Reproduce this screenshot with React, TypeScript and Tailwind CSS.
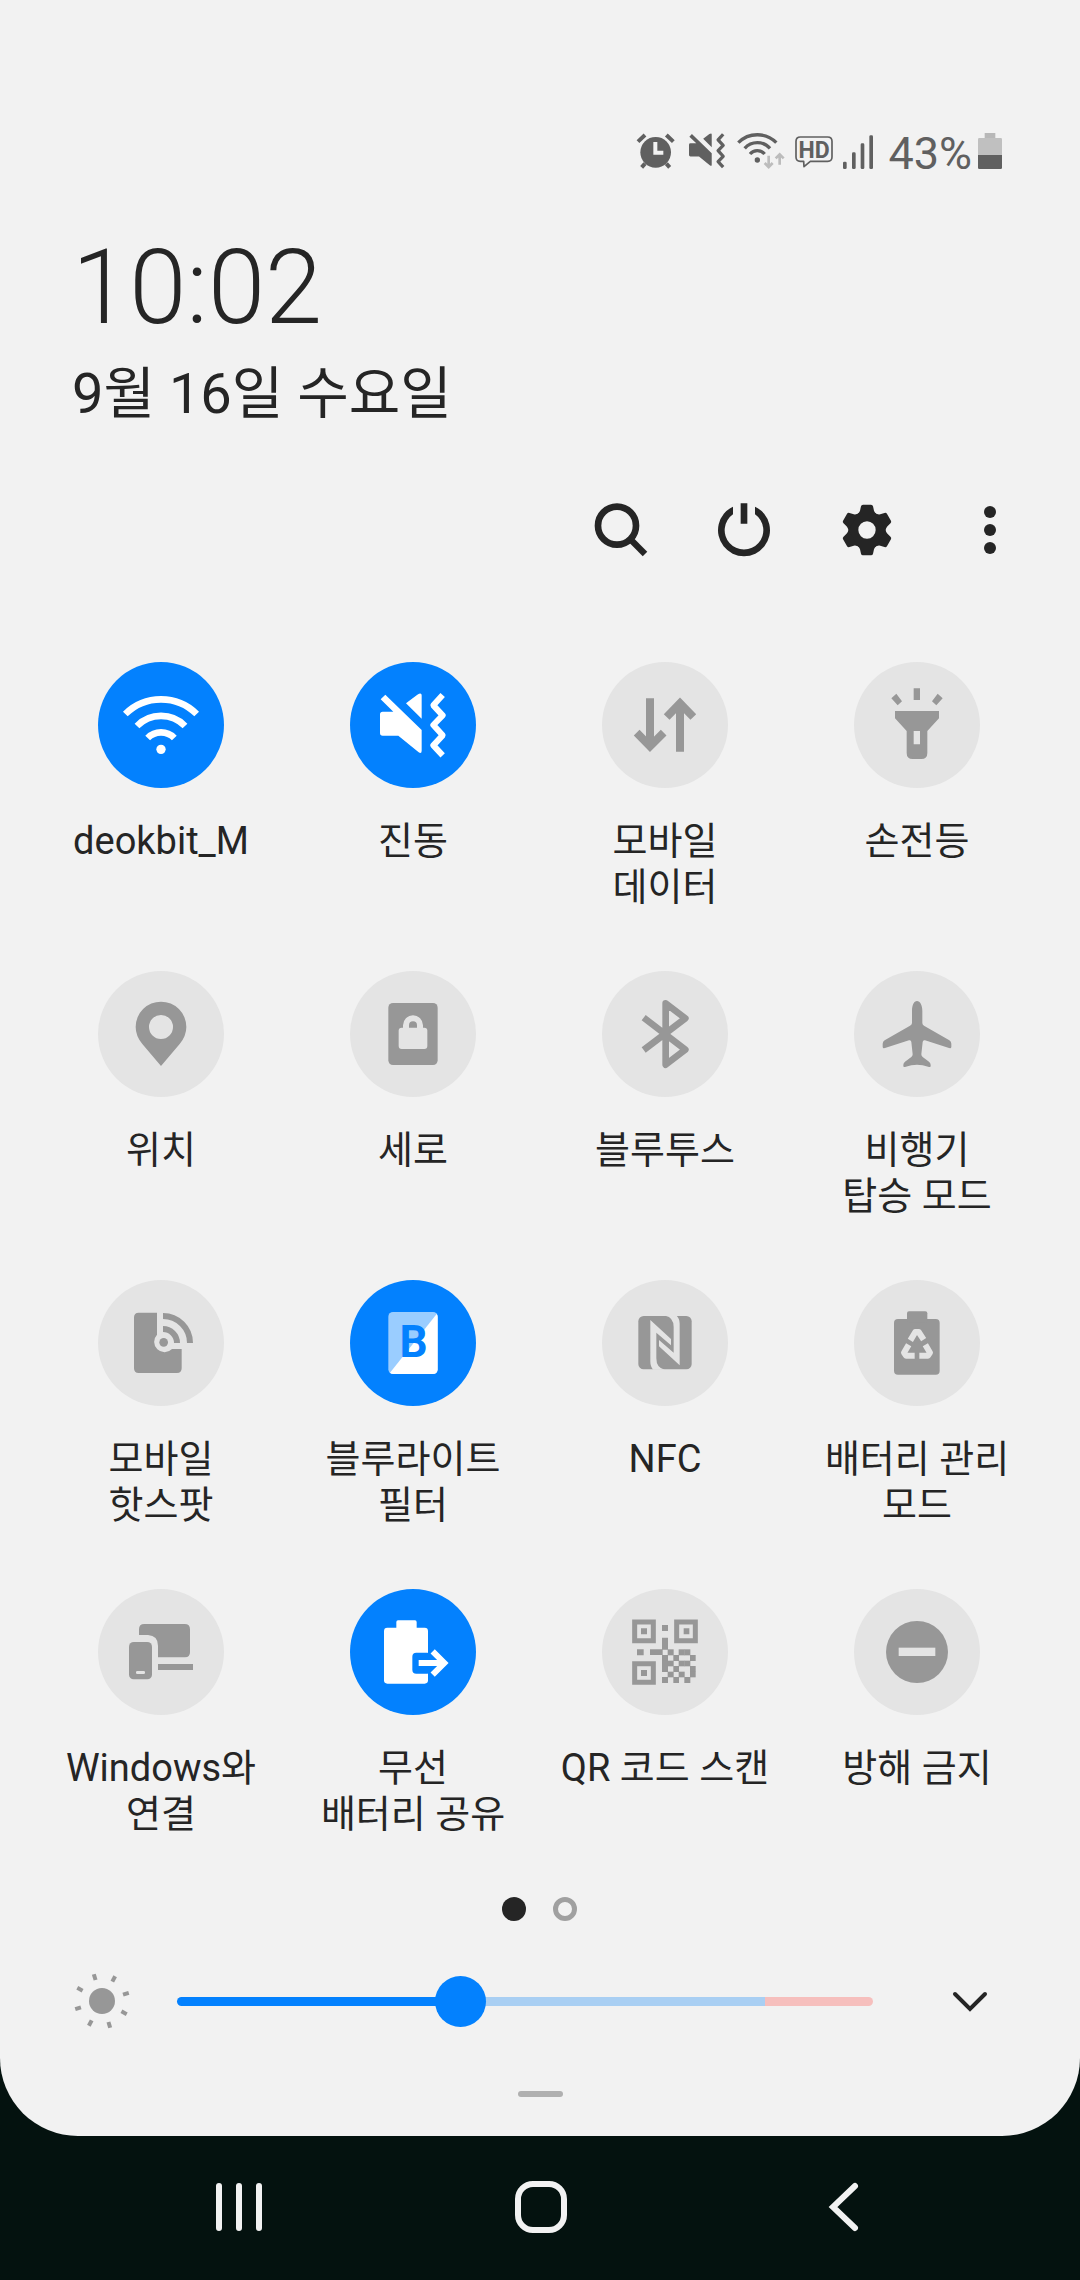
import { useState, type ReactNode } from "react";

const OFF = "#e4e4e4";
const BLUE = "#0381fe";

// Shared by the status bar and the vibrate tile
const vibrateShape = (
  <>
    <path
      fill="currentColor"
      d="M168 124L202 98Q215 90 215 100V170ZM106 98L215 204V266Q215 276 206 271L145 221H98Q90 221 90 213V157Q90 149 98 149H130L92 112Z"
    />
    <path
      fill="none"
      stroke="currentColor"
      strokeWidth="18"
      strokeLinejoin="round"
      d="M278 99L250 130L278 160L250 189L278 220L250 250L278 280"
    />
  </>
);

const qrCells = [".#.##.", "#.#..#", "##.##.", "#.#..#", ".#.#.#", "#.#.#."];
const qrX = [180, 197, 214, 230, 247, 264, 280];
const qrY = [181, 198, 215, 231, 248, 264, 281];

type Tile = { label: string; on?: boolean; icon: ReactNode };

const tiles: Tile[] = [
  {
    label: "deokbit_M",
    on: true,
    icon: (
      <>
        <path
          fill="none"
          stroke="currentColor"
          strokeWidth="20"
          d="M82 156A152 152 0 0 1 296 156M117 192A101 101 0 0 1 261 192M149 228A56 56 0 0 1 229 228"
        />
        <circle cx="189" cy="262" r="14" />
      </>
    ),
  },
  { label: "진동", on: true, icon: vibrateShape },
  {
    label: "모바일\n데이터",
    icon: (
      <path
        fill="none"
        stroke="currentColor"
        strokeWidth="24"
        d="M144 109V250M104 212L144 253L185 212M234 269V127M194 165L234 124L274 165"
      />
    ),
  },
  {
    label: "손전등",
    icon: (
      <>
        <path d="M179 79H198V114H179ZM112 109L127 95L144 118L131 130ZM266 109L251 95L234 118L247 130Z" />
        <path
          fillRule="evenodd"
          d="M123 147H255V169L220 207V273Q220 291 202 291H176Q158 291 158 273V207L123 169ZM179 207V247H198V207Z"
        />
      </>
    ),
  },
  {
    label: "위치",
    icon: (
      <path
        fillRule="evenodd"
        d="M189 285L133 219Q113 195 113 168A76 76 0 0 1 265 168Q265 195 245 219ZM153 168A36 36 0 1 0 225 168A36 36 0 1 0 153 168Z"
      />
    ),
  },
  {
    label: "세로",
    icon: (
      <>
        <rect x="115" y="96" width="148" height="186" rx="14" />
        <rect x="146" y="170" width="86" height="64" rx="9" fill={OFF} />
        <path fill="none" stroke={OFF} strokeWidth="18" d="M168 174V163A21 21 0 0 1 210 163V174" />
      </>
    ),
  },
  {
    label: "블루투스",
    icon: (
      <path
        fill="none"
        stroke="currentColor"
        strokeWidth="20"
        strokeLinejoin="round"
        d="M125 140L250 236L191 281V97L250 142L125 237"
      />
    ),
  },
  {
    label: "비행기\n탑승 모드",
    icon: (
      <path d="M189 90C198 90 205 102 205 120V156Q205 161 210 164L286 208Q292 212 292 218V227Q292 233 285 231L213 208Q207 206 206 213L202 250Q202 255 206 258L225 272Q230 276 230 282V286Q230 289 225 288Q205 281 189 281Q173 281 153 288Q148 289 148 286V282Q148 276 153 272L172 258Q176 255 176 250L172 213Q171 206 165 208L93 231Q86 233 86 227V218Q86 212 92 208L168 164Q174 161 174 156V120C174 102 180 90 189 90Z" />
    ),
  },
  {
    label: "모바일\n핫스팟",
    icon: (
      <>
        <path d="M122 98H177V164A31 31 0 1 0 222 207H251V265Q251 279 237 279H122Q108 279 108 265V112Q108 98 122 98Z" />
        <circle cx="197" cy="187" r="13" />
        <path
          fill="none"
          stroke="currentColor"
          strokeWidth="18"
          d="M195 147A42 42 0 0 1 237 189M195 108A81 81 0 0 1 276 189"
        />
      </>
    ),
  },
  {
    label: "블루라이트\n필터",
    on: true,
    icon: (
      <>
        <rect x="115" y="96" width="148" height="186" rx="14" fill="#9acdff" />
        <path d="M260 102Q263 105 263 110V268Q263 282 249 282H129Q124 282 120 278Z" />
        <text
          x="191"
          y="232"
          textAnchor="middle"
          fontSize="132"
          fontWeight="700"
          fill={BLUE}
        >
          B
        </text>
      </>
    ),
  },
  {
    label: "NFC",
    icon: (
      <>
        <rect x="109" y="108" width="160" height="160" rx="16" />
        <path
          fill={OFF}
          d="M145 120L207 177V196L163 158V235Q163 264 188 269H154Q145 260 145 245ZM233 256L171 199V180L215 218V141Q215 112 190 107H224Q233 116 233 131Z"
        />
      </>
    ),
  },
  {
    label: "배터리 관리\n모드",
    icon: (
      <>
        <rect x="120" y="117" width="137" height="167" rx="12" />
        <rect x="159" y="94" width="61" height="34" rx="6" />
        <path
          fill="none"
          stroke={OFF}
          strokeWidth="18"
          strokeLinejoin="round"
          d="M169 181L184 156H194L209 179M164 194L150 218L156 227H182M214 194L228 218L222 227H196"
        />
      </>
    ),
  },
  {
    label: "Windows와\n연결",
    icon: (
      <>
        <path d="M123 138V121Q123 105 139 105H260Q276 105 276 121V190Q276 205 261 205H180V170Q180 140 150 138Z" />
        <rect x="180" y="225" width="105" height="18" />
        <rect x="93" y="159" width="69" height="112" rx="14" />
        <rect x="114" y="246" width="27" height="9" rx="4" fill={OFF} />
      </>
    ),
  },
  {
    label: "무선\n배터리 공유",
    on: true,
    icon: (
      <>
        <rect x="102" y="116" width="132" height="168" rx="10" />
        <rect x="139" y="94" width="61" height="34" rx="5" />
        <rect x="187" y="191" width="56" height="63" rx="12" fill={BLUE} />
        <path
          fill="none"
          stroke="currentColor"
          strokeWidth="18"
          d="M206 222H280M248 187L283 222L248 257"
        />
      </>
    ),
  },
  {
    label: "QR 코드 스캔",
    icon: (
      <>
        <path
          fill="none"
          stroke="currentColor"
          strokeWidth="15"
          d="M98 99H154V155H98ZM224 99H280V155H224ZM98 224H154V280H98Z"
        />
        <path d="M117 118H135V136H117ZM245 118H262V136H245ZM117 243H135V261H117ZM180 108H198V126H180ZM105 181H125V199H105ZM180 146H198V182H180ZM144 181H182V198H144Z" />
        {qrCells.flatMap((row, y) =>
          [...row].map((cell, x) =>
            cell === "#" ? (
              <rect
                key={`${x}-${y}`}
                x={qrX[x]}
                y={qrY[y]}
                width={qrX[x + 1] - qrX[x] + 1}
                height={qrY[y + 1] - qrY[y] + 1}
              />
            ) : null,
          ),
        )}
      </>
    ),
  },
  {
    label: "방해 금지",
    icon: (
      <>
        <circle cx="189" cy="189" r="93" />
        <rect x="134" y="176" width="110" height="25" fill={OFF} />
      </>
    ),
  },
];

function StatusBar() {
  return (
    <div className="flex h-[60px] items-baseline justify-end gap-[10px] pr-[78px] text-[#606060]">
      <svg className="h-9 w-11" viewBox="0 0 132 108">
        <circle cx="62" cy="58" r="46" fill="currentColor" />
        <path
          fill="none"
          stroke="currentColor"
          strokeWidth="12"
          d="M9 26L30 6M94 6L115 26M30 92L20 103M94 92L104 103"
        />
        <path fill="none" stroke="#f2f2f2" strokeWidth="12" d="M61 27V59H85" />
      </svg>
      <svg className="h-9 w-[38px]" viewBox="90 95 209 192">
        {vibrateShape}
      </svg>
      <svg className="h-9 w-12" viewBox="0 0 144 108">
        <path
          fill="none"
          stroke="currentColor"
          strokeWidth="10"
          d="M4 29A80 80 0 0 1 118 29M23 46A51 51 0 0 1 99 46M39 63A29 29 0 0 1 83 63"
        />
        <circle cx="61" cy="81" r="8" fill="currentColor" />
        <path
          fill="none"
          stroke="#bcbcbc"
          strokeWidth="8"
          d="M95 68V102M83 90L95 102L107 90M128 95V63M116 76L128 64L140 76"
        />
      </svg>
      <svg className="h-9 w-[38px]" viewBox="0 0 114 108">
        <path
          fill="none"
          stroke="currentColor"
          strokeWidth="5"
          strokeLinejoin="round"
          d="M16 12H98Q111 12 111 25V72Q111 85 98 85H46L27 101L26 85H16Q3 85 3 72V25Q3 12 16 12Z"
        />
        <text x="57" y="74" textAnchor="middle" fontSize="69" fontWeight="700" fill="currentColor">
          HD
        </text>
      </svg>
      <svg className="h-9 w-[30px]" viewBox="0 0 90 108">
        <g fill="currentColor">
          <rect x="0" y="86" width="11" height="22" rx="4" />
          <rect x="27" y="58" width="11" height="50" rx="4" />
          <rect x="53" y="31" width="11" height="77" rx="4" />
          <rect x="79" y="7" width="11" height="101" rx="4" />
        </g>
      </svg>
      <div className="flex items-baseline gap-[6px] pl-[5px]">
        <span className="text-[45px] leading-[60px]">43%</span>
        <svg className="h-9 w-6" viewBox="0 0 72 108">
          <path fill="#b8b8b8" d="M20 0H52V16H20Z" />
          <path fill="#c0c0c0" d="M4 15H68Q72 15 72 19V67H0V19Q0 15 4 15Z" />
          <path fill="currentColor" d="M0 66H72V104Q72 108 68 108H4Q0 108 0 104Z" />
        </svg>
      </div>
    </div>
  );
}

const gearTeeth = [0, 60, 120, 180, 240, 300];

const actions = [
  {
    name: "검색",
    icon: (
      <g fill="none" stroke="currentColor">
        <circle cx="78" cy="77" r="57" strokeWidth="20" />
        <path strokeWidth="19" d="M118 118L162 162" />
      </g>
    ),
  },
  {
    name: "전원",
    icon: (
      <path d="M57 20A78 78 0 1 0 123 20V43A58 58 0 1 1 57 43ZM80 10H100V71H80Z" />
    ),
  },
  {
    name: "설정",
    icon: (
      <g transform="translate(90 90)">
        <circle r="41" fill="none" stroke="currentColor" strokeWidth="30" />
        {gearTeeth.map((angle) => (
          <path
            key={angle}
            transform={`rotate(${angle})`}
            d="M-12 -76H12Q17 -76 18 -71L21 -58Q22 -54 28 -48L-28 -48Q-22 -54 -21 -58L-18 -71Q-17 -76 -12 -76Z"
          />
        ))}
      </g>
    ),
  },
  {
    name: "더보기",
    icon: (
      <>
        <circle cx="90" cy="36" r="18" />
        <circle cx="90" cy="90" r="18" />
        <circle cx="90" cy="144" r="18" />
      </>
    ),
  },
];

function QuickTile({ label, on, icon }: Tile) {
  return (
    <button
      type="button"
      aria-pressed={!!on}
      className="flex flex-col items-center gap-[30px]"
    >
      <span
        className={`size-[126px] rounded-full ${on ? "bg-[#0381fe] text-white" : "bg-[#e4e4e4] text-[#979797]"}`}
      >
        <svg className="size-full" viewBox="0 0 378 378" fill="currentColor">
          {icon}
        </svg>
      </span>
      <span className="min-h-[92px] text-[38px] leading-[46px] whitespace-pre">{label}</span>
    </button>
  );
}

const sunRays = [28, 73, 118, 163, 208, 253, 298, 343];

function Brightness() {
  const [level, setLevel] = useState(40);
  return (
    <div className="flex h-[60px] items-center pr-20 pl-[72px]">
      <svg className="size-[60px] text-[#979797]" viewBox="-30 -30 60 60" fill="currentColor">
        <circle r="13" />
        {sunRays.map((angle) => (
          <rect
            key={angle}
            x="22"
            y="-2"
            width="6"
            height="4"
            transform={`rotate(${angle})`}
          />
        ))}
      </svg>
      <input
        type="range"
        aria-label="밝기"
        min="0"
        max="100"
        value={level}
        onChange={(e) => setLevel(Number(e.target.value))}
        style={{
          backgroundImage: `linear-gradient(to right, ${BLUE} ${level}%, #a9cff3 ${level}%, #a9cff3 84.5%, #f6bfbd 84.5%)`,
        }}
        className="mr-[67px] ml-[45px] h-[9px] min-w-0 flex-1 appearance-none rounded-full [&::-webkit-slider-thumb]:size-[51px] [&::-webkit-slider-thumb]:appearance-none [&::-webkit-slider-thumb]:rounded-full [&::-webkit-slider-thumb]:bg-[#0381fe]"
      />
      <button type="button" aria-label="펼치기" className="size-[60px]">
        <svg className="size-full" viewBox="0 0 60 60" fill="none">
          <path
            stroke="currentColor"
            strokeWidth="4"
            strokeLinecap="round"
            d="M15 23L30 38L45 23"
          />
        </svg>
      </button>
    </div>
  );
}

function NavBar() {
  return (
    <nav className="grid h-[142px] grid-cols-3 place-items-center pr-[86px] pl-[88px] text-[#f2f2f2]">
      <button type="button" aria-label="최근 앱">
        <svg className="size-[60px]" viewBox="0 0 60 60" fill="none">
          <path
            stroke="currentColor"
            strokeWidth="6"
            strokeLinecap="round"
            d="M10 9V51M30 9V51M50 9V51"
          />
        </svg>
      </button>
      <button type="button" aria-label="홈">
        <svg className="size-[60px]" viewBox="0 0 60 60" fill="none">
          <rect x="7" y="7" width="46" height="46" rx="15" stroke="currentColor" strokeWidth="6" />
        </svg>
      </button>
      <button type="button" aria-label="뒤로">
        <svg className="size-[60px]" viewBox="0 0 60 60" fill="none">
          <path
            stroke="currentColor"
            strokeWidth="6"
            strokeLinecap="round"
            d="M42 9L20 30L42 51"
          />
        </svg>
      </button>
    </nav>
  );
}

export default function App() {
  return (
    <div className="min-h-screen bg-[#04120f] font-[Roboto,'Noto_Sans_CJK_KR',sans-serif] text-[#252525]">
      <main className="rounded-b-[78px] bg-[#f2f2f2] pt-[124px] pb-[39px]">
        <StatusBar />

        <header className="pt-[44px] pl-[72px]">
          <h1 className="text-[103px] leading-[120px] font-light">10:02</h1>
          <p className="mt-[10px] text-[56px] leading-[72px]">9월 16일 수요일</p>
        </header>

        <div className="mt-[70px] flex justify-end gap-[63px] pr-[60px]">
          {actions.map((action) => (
            <button key={action.name} type="button" aria-label={action.name}>
              <svg className="size-[60px]" viewBox="0 0 180 180" fill="currentColor">
                {action.icon}
              </svg>
            </button>
          ))}
        </div>

        <section className="mt-[102px] grid grid-cols-4 gap-y-[61px] pr-[37px] pl-[35px]">
          {tiles.map((tile) => (
            <QuickTile key={tile.label} {...tile} />
          ))}
        </section>

        <div className="mt-[60px] flex justify-center gap-[27px] pr-[2px]">
          <span className="size-6 rounded-full bg-[#252525]" />
          <span className="size-6 rounded-full border-5 border-[#a0a0a0]" />
        </div>

        <div className="mt-[50px]">
          <Brightness />
        </div>

        <div className="mx-auto mt-[60px] h-[6px] w-[45px] rounded-full bg-[#b0b0b0]" />
      </main>

      <NavBar />
    </div>
  );
}
